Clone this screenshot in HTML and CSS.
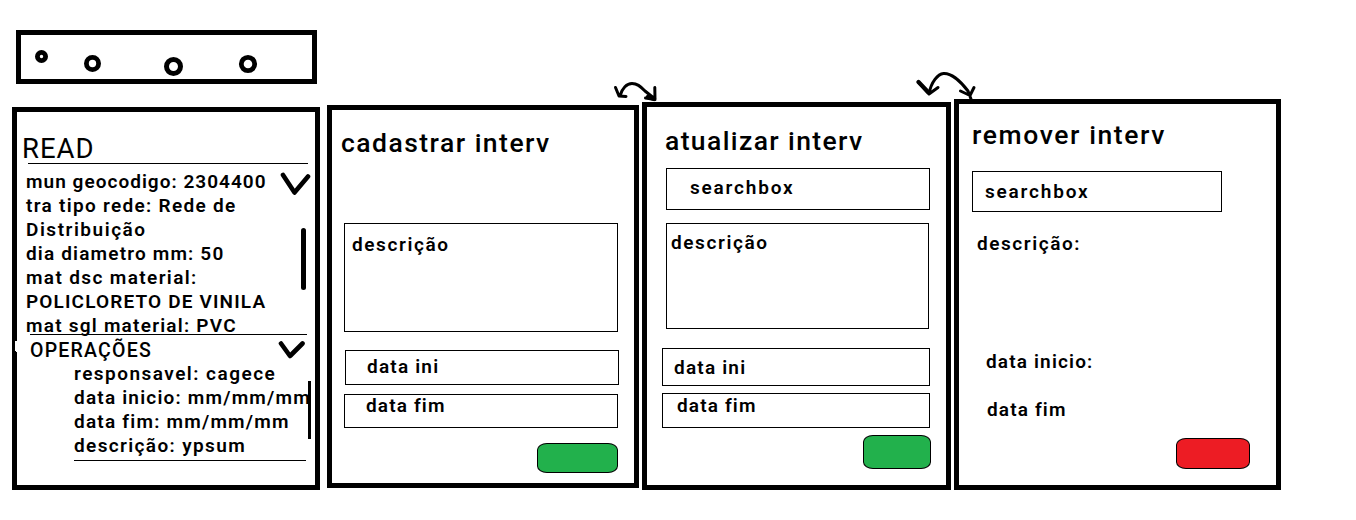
FILE: index.html
```html
<!DOCTYPE html>
<html lang="pt-BR">
<head>
<meta charset="utf-8">
<title>Interv</title>
<link rel="stylesheet" href="styles.css">
</head>
<body>
<header class="toolbar">
<svg width="291" height="44" viewBox="21 35 291 44" fill="none" stroke="#000">
<circle cx="41.5" cy="56.5" r="4.1" stroke-width="4.8"/>
<circle cx="92.5" cy="63.5" r="6.1" stroke-width="4.8"/>
<circle cx="173.5" cy="66.5" r="7" stroke-width="5"/>
<circle cx="248" cy="64" r="6.7" stroke-width="4.8"/>
</svg>
</header>
<main class="board">
<section class="panel read">
<h2 class="title t-read">READ</h2>
<hr class="rule rule-head">
<div class="details">
<p class="t-mun">mun geocodigo: 2304400</p>
<p class="t-tra">tra tipo rede: Rede de</p>
<p class="t-dis">Distribuição</p>
<p class="t-dia">dia diametro mm: 50</p>
<p class="t-mat">mat dsc material:</p>
<p class="t-pol">POLICLORETO DE VINILA</p>
<p class="t-sgl">mat sgl material: PVC</p>
</div>
<hr class="rule rule-mid">
<h3 class="subtitle t-ope">OPERAÇÕES</h3>
<div class="operations">
<p class="t-res">responsavel: cagece</p>
<p class="t-ini">data inicio: mm/mm/mm</p>
<p class="t-fim">data fim: mm/mm/mm</p>
<p class="t-yps">descrição: ypsum</p>
</div>
<hr class="rule rule-end">
<svg class="marks" width="308" height="383" viewBox="12 107 308 383" fill="none" stroke="#000">
<path d="M283 175L294.500 192.500L308 176.500M281 343.500L290 356L302.500 343.500" stroke-width="4.600" stroke-linecap="round" stroke-linejoin="round"/>
<path d="M303.500 230.500V287.500" stroke-width="5" stroke-linecap="round"/>
<path d="M309.500 381V439" stroke-width="3"/>
<path d="M15 341H17V352H16V351H15Z" fill="#fff" stroke="none"/>
</svg>
</section>
<section class="panel create">
<h2 class="title t-cad">cadastrar interv</h2>
<div class="box desc"><span class="t-desc">descrição</span></div>
<div class="box start"><span class="t-start">data ini</span></div>
<div class="box end"><span class="t-end">data fim</span></div>
<button class="action" type="button" aria-label="cadastrar"></button>
</section>
<section class="panel update">
<h2 class="title t-atu">atualizar interv</h2>
<div class="box search"><span class="t-search">searchbox</span></div>
<div class="box desc"><span class="t-desc">descrição</span></div>
<div class="box start"><span class="t-start">data ini</span></div>
<div class="box end"><span class="t-end">data fim</span></div>
<button class="action" type="button" aria-label="atualizar"></button>
</section>
<section class="panel remove">
<h2 class="title t-rem">remover interv</h2>
<div class="box search"><span class="t-search">searchbox</span></div>
<p class="desc t-descc">descrição:</p>
<p class="start t-inic">data inicio:</p>
<p class="end t-end">data fim</p>
<button class="action" type="button" aria-label="remover"></button>
</section>
</main>
<svg class="arrows" width="380" height="60" viewBox="600 60 380 60" fill="none" stroke="#000" stroke-width="3" stroke-linecap="round" stroke-linejoin="round">
<path d="M615.500 87.500L619 96L626 96.500M620 96C622 88 627 83.500 632 83.500S640 86 645 91L655 99M654.800 87.500L655 99.500L645.500 98"/>
<path d="M918.500 82L929 94L938 87.500M929 94C931 82 938 74 943.500 73.500C952 73 962 83 968 91L971 99M960.500 91L970 95.500L974 87.500"/>
<path d="M918.500 82L928 92M648 97L654 99" stroke-width="4.200"/>
</svg>
</body>
</html>
```
FILE: styles.css
```css
* { box-sizing: border-box; }
body { margin: 0; padding-top: 30px; width: 1356px; height: 520px; overflow: hidden; background: #fff; color: #000; font: 600 19px/24px Roboto, "Liberation Sans", sans-serif; }
h2, h3, p { margin: 0; white-space: nowrap; }
svg { display: block; }
.toolbar { width: 301px; height: 54px; margin-left: 16px; border: 5px solid #000; }
.board { display: flex; align-items: flex-start; padding: 15px 0 0 12px; }
.panel { flex: none; display: flex; flex-direction: column; align-items: flex-start; border: 5px solid #000; }
.title { flex: none; height: 30px; font-size: 26.5px; line-height: 32px; font-weight: 500; }
.rule { flex: none; height: 1px; margin: 0; border: 0; background: #000; }
.box { flex: none; border: 1px solid #000; line-height: 24px; white-space: nowrap; }
.box span { display: block; }
.action { flex: none; padding: 0; border: 1px solid #000; border-radius: 10px / 7px; background: #22b14c; }

/* Letter spacing per label */
.t-read { letter-spacing: 1px; }
.t-mun { letter-spacing: 1.03px; }
.t-tra { letter-spacing: 1.3px; }
.t-dis { letter-spacing: 1.52px; }
.t-dia { letter-spacing: 1.17px; }
.t-mat { letter-spacing: 1.37px; }
.t-pol { letter-spacing: 1.15px; }
.t-sgl { letter-spacing: 1.23px; }
.t-ope { letter-spacing: 1.22px; }
.t-res { letter-spacing: 1.47px; }
.t-ini { letter-spacing: 1.2px; }
.t-fim { letter-spacing: 1.22px; }
.t-yps { letter-spacing: 1.37px; }
.t-cad { letter-spacing: 1.47px; }
.t-desc { letter-spacing: 1.6px; }
.t-start { letter-spacing: 1.2px; }
.t-end { letter-spacing: 1.15px; }
.t-atu { letter-spacing: 1.38px; }
.t-search { letter-spacing: 1.8px; }
.t-rem { letter-spacing: 1.6px; }
.t-descc { letter-spacing: 1.55px; }
.t-inic { letter-spacing: 1.16px; }

.read { position: relative; width: 308px; height: 383px; margin-top: 8px; padding-top: 21px; }
.read .title { margin-left: 5px; font-size: 27.5px; font-weight: 400; }
.rule-head { width: 280px; margin-left: 11px; }
.details { height: 170px; padding: 6px 0 0 9px; }
.rule-mid { width: 277px; margin-left: 13px; }
.subtitle { height: 23px; margin: 3px 0 0 13px; font-size: 19.5px; line-height: 26px; font-weight: 500; }
.operations { height: 99px; padding: 1px 0 0 57px; }
.rule-end { width: 232px; margin-left: 57px; }
.marks { position: absolute; left: -5px; top: -5px; }

.create { width: 312px; height: 383px; margin: 6px 0 0 7px; padding: 17px 0 0 12px; }
.create .title { margin-left: -3px; }
.create .desc { width: 274px; height: 109px; margin-top: 66px; padding: 9px 0 0 7px; }
.create .start { width: 274px; height: 35px; margin: 18px 0 0 1px; padding: 4px 0 0 21px; }
.create .end { width: 274px; height: 34px; margin-top: 9px; padding-left: 21px; line-height: 22px; }
.create .action { width: 81px; height: 30px; margin: 15px 0 0 193px; }

.update { width: 309px; height: 388px; margin: 3px 0 0 3px; padding: 18px 0 0 15px; }
.update .title { margin-left: 3px; }
.update .search { width: 264px; height: 42px; margin: 13px 0 0 4px; padding: 7px 0 0 23px; }
.update .desc { width: 263px; height: 106px; margin: 13px 0 0 4px; padding: 7px 0 0 4px; }
.update .start { width: 268px; height: 38px; margin-top: 19px; padding: 7px 0 0 11px; }
.update .end { width: 268px; height: 35px; margin-top: 7px; padding-left: 14px; }
.update .action { width: 68px; height: 34px; margin: 7px 0 0 201px; }

.remove { width: 327px; height: 391px; margin-left: 3px; padding: 15px 0 0 13px; }
.remove .search { width: 250px; height: 41px; margin-top: 22px; padding: 8px 0 0 12px; }
.remove .desc { margin: 20px 0 0 5px; }
.remove .start { margin: 94px 0 0 14px; }
.remove .end { margin: 24px 0 0 15px; }
.remove .action { width: 74px; height: 31px; margin: 16px 0 0 204px; background: #ed1c24; }

.arrows { position: absolute; left: 600px; top: 60px; }
```
